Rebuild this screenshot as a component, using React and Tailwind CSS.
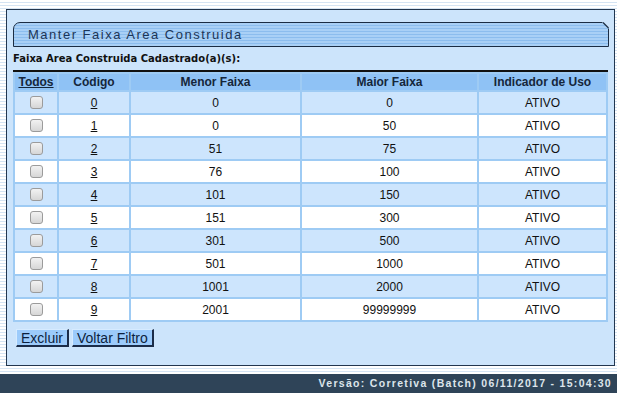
import React from "react";

const rows = [
  ["0", "0", "0"],
  ["1", "0", "50"],
  ["2", "51", "75"],
  ["3", "76", "100"],
  ["4", "101", "150"],
  ["5", "151", "300"],
  ["6", "301", "500"],
  ["7", "501", "1000"],
  ["8", "1001", "2000"],
  ["9", "2001", "99999999"],
];

const stripes =
  "bg-[repeating-linear-gradient(180deg,#ffffff_0px,#ffffff_2px,#d5e4f3_2px,#d5e4f3_3px)]";

function Box() {
  return (
    <div className="mx-auto w-[13px] h-[13px] rounded-[3px] border border-[#9b9b9b] bg-[linear-gradient(180deg,#f2f2f2,#d6d6d6)]" />
  );
}

function Btn({ children }) {
  return (
    <button className="h-[18px] px-[4px] bg-[#9ccbfb] border-t border-l border-t-[#d6ebff] border-l-[#d6ebff] border-r-2 border-b-2 border-r-[#1b2c48] border-b-[#1b2c48] text-[14px] leading-[14px] text-[#0c1f3d]">
      {children}
    </button>
  );
}

export default function App() {
  return (
    <div
      className={`w-[617px] h-[393px] flex flex-col overflow-hidden ${stripes}`}
      style={{ fontFamily: '"Liberation Sans", Arial, sans-serif' }}
    >
      <div className="mt-[9px] ml-[6px] w-[609px] h-[357px] border border-[#22364f] bg-[#cce4fb] flex flex-col pl-[6px] pr-[5px] pt-[12px]">
        <div className="relative h-[25px] w-[596px] border border-[#1b2d44] rounded-tl-[7px] bg-[repeating-linear-gradient(180deg,#a9d0f6_0px,#a9d0f6_2px,#8cbdee_2px,#8cbdee_3px)] flex items-center pl-[14px]">
          <span className="text-[13px] tracking-[1.5px] text-[#1c3557] leading-none">
            Manter Faixa Area Construida
          </span>
          <svg className="absolute -top-px -right-px" width="7" height="7" viewBox="0 0 7 7">
            <polygon points="0,0 7,0 7,7" fill="#cce4fb" />
            <line x1="1" y1="0.5" x2="6.5" y2="6" stroke="#1b2d44" strokeWidth="1.2" />
          </svg>
        </div>

        <div
          className="mt-[6px] text-[10px] font-bold text-[#111] leading-[12px]"
          style={{ fontFamily: '"DejaVu Sans", Verdana, sans-serif' }}
        >
          Faixa Area Construida Cadastrado(a)(s):
        </div>

        <table className="mt-[5px] w-[595px] table-fixed border-separate border-spacing-[2px] border-t-2 border-t-[#111] bg-[#9ecbf4] text-[12px] text-[#111]">
          <colgroup>
            <col className="w-[42px]" />
            <col className="w-[70px]" />
            <col className="w-[169px]" />
            <col className="w-[175px]" />
            <col className="w-[127px]" />
          </colgroup>
          <thead>
            <tr className="h-[16px] bg-[#8fc2f5] font-bold text-[#15263b]">
              <th className="p-0 leading-[16px] underline">Todos</th>
              <th className="p-0 leading-[16px]">Código</th>
              <th className="p-0 leading-[16px]">Menor Faixa</th>
              <th className="p-0 leading-[16px]">Maior Faixa</th>
              <th className="p-0 leading-[16px]">Indicador de Uso</th>
            </tr>
          </thead>
          <tbody>
            {rows.map(([cod, menor, maior], i) => (
              <tr key={cod} className={`h-[21px] text-center ${i % 2 === 0 ? "bg-[#cde5fd]" : "bg-white"}`}>
                <td className="p-0">
                  <Box />
                </td>
                <td className="p-0 underline">{cod}</td>
                <td className="p-0">{menor}</td>
                <td className="p-0">{maior}</td>
                <td className="p-0">ATIVO</td>
              </tr>
            ))}
          </tbody>
        </table>

        <div className="mt-[7px] ml-[3px] flex gap-[3px]">
          <Btn>Excluir</Btn>
          <Btn>Voltar Filtro</Btn>
        </div>
      </div>

      <div className="mt-[8px] h-[19px] bg-[#2f4458] flex items-center justify-end pr-[5px]">
        <span className="text-[10.5px] font-bold tracking-[1.3px] text-[#dde4eb] leading-none">
          Versão: Corretiva (Batch) 06/11/2017 - 15:04:30
        </span>
      </div>
    </div>
  );
}
